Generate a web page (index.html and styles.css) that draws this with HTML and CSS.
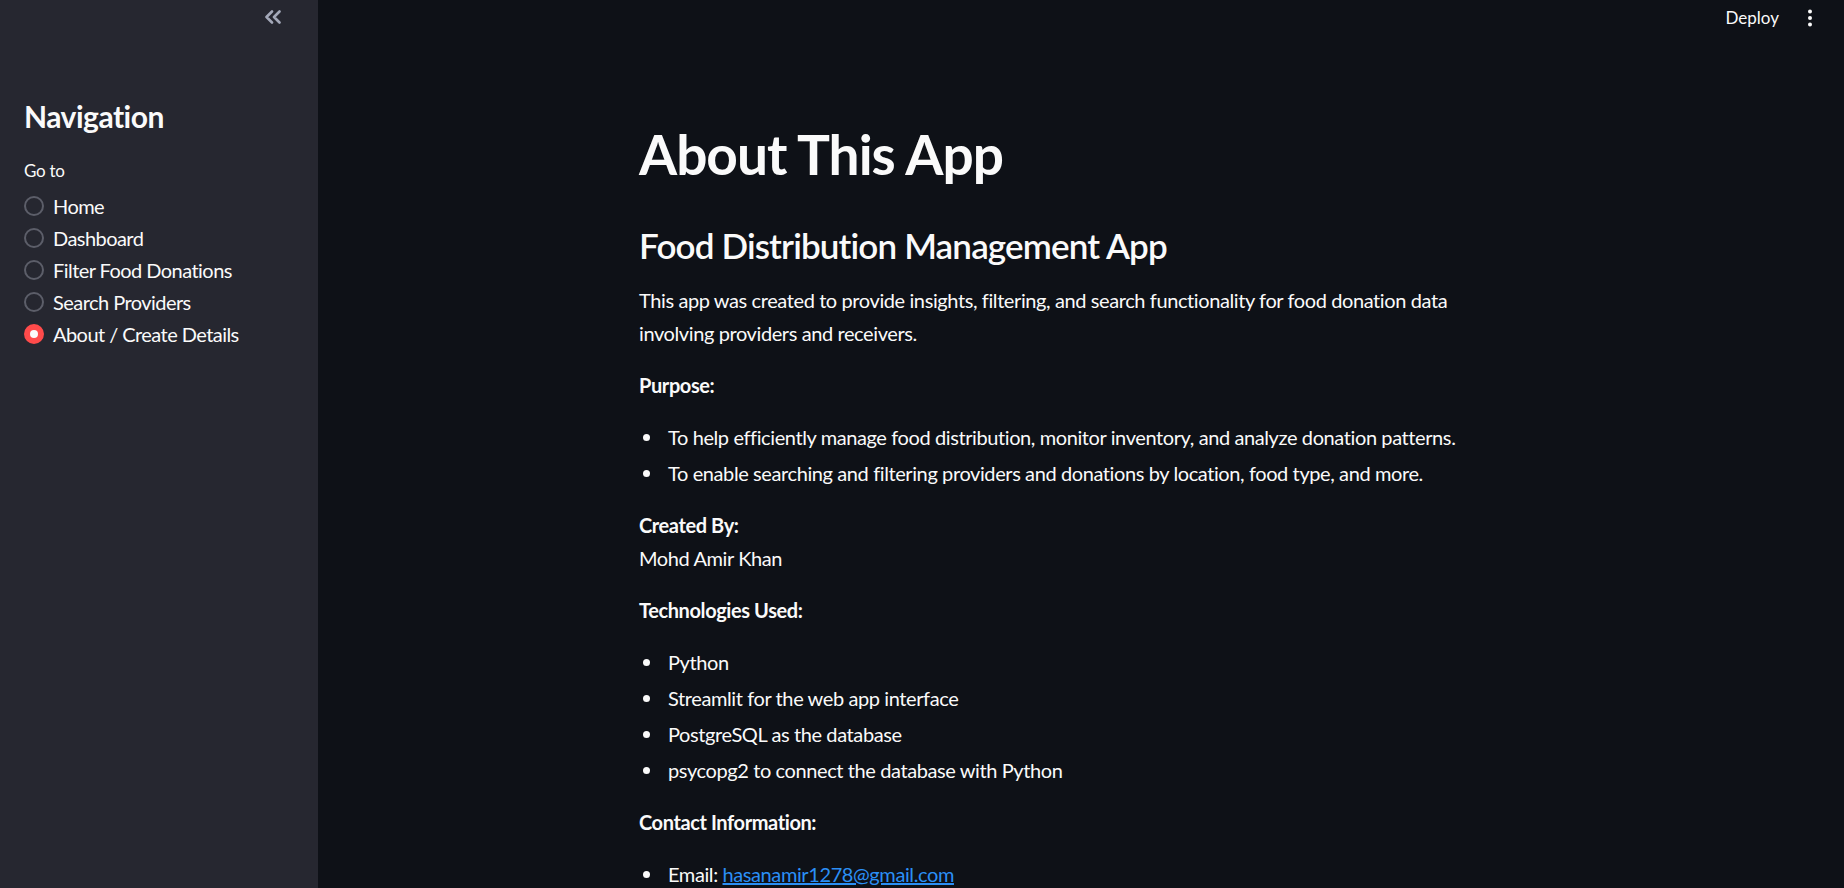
FILE: index.html
```html
<!DOCTYPE html>
<html lang="en">
<head>
<meta charset="utf-8">
<title>About This App</title>
<link rel="stylesheet" href="styles.css">
</head>
<body>
<div class="app">
  <aside class="sidebar">
    <div class="sb-top">
      <span class="collapse" aria-label="Collapse sidebar">
        <svg width="18" height="14" viewBox="0 0 18 14"><path d="M8 1.5 L2.5 7 L8 12.5 M15.5 1.5 L10 7 L15.5 12.5" fill="none" stroke="#a3a8b8" stroke-width="2.6" stroke-linecap="round" stroke-linejoin="round"/></svg>
      </span>
    </div>
    <div class="sb-content">
      <h1 class="sb-title">Navigation</h1>
      <div class="radio-label">Go to</div>
      <div class="radio-group">
        <div class="radio"><span class="dot"></span><span>Home</span></div>
        <div class="radio"><span class="dot"></span><span>Dashboard</span></div>
        <div class="radio"><span class="dot"></span><span>Filter Food Donations</span></div>
        <div class="radio"><span class="dot"></span><span>Search Providers</span></div>
        <div class="radio checked"><span class="dot"></span><span>About / Create Details</span></div>
      </div>
    </div>
  </aside>
  <main class="main">
    <header class="toolbar">
      <span class="deploy">Deploy</span>
      <span class="kebab"><svg width="6" height="18" viewBox="0 0 6 18"><circle cx="3" cy="2.5" r="2" fill="#fafafa"/><circle cx="3" cy="9" r="2" fill="#fafafa"/><circle cx="3" cy="15.5" r="2" fill="#fafafa"/></svg></span>
    </header>
    <div class="block">
      <h1 class="title">About This App</h1>
      <h3 class="subheader">Food Distribution Management App</h3>
      <p>This app was created to provide insights, filtering, and search functionality for food donation data involving providers and receivers.</p>
      <p><strong>Purpose:</strong></p>
      <ul>
        <li>To help efficiently manage food distribution, monitor inventory, and analyze donation patterns.</li>
        <li>To enable searching and filtering providers and donations by location, food type, and more.</li>
      </ul>
      <p><strong>Created By:</strong><br>Mohd Amir Khan</p>
      <p><strong>Technologies Used:</strong></p>
      <ul>
        <li>Python</li>
        <li>Streamlit for the web app interface</li>
        <li>PostgreSQL as the database</li>
        <li>psycopg2 to connect the database with Python</li>
      </ul>
      <p><strong>Contact Information:</strong></p>
      <ul>
        <li>Email: <a href="#">hasanamir1278@gmail.com</a></li>
      </ul>
    </div>
  </main>
</div>
</body>
</html>
```
FILE: styles.css
```css
html, body {
  margin: 0;
  padding: 0;
  height: 100%;
  overflow: hidden;
}
body {
  background: #0e1117;
  color: #fafafa;
  font-family: Lato, "Noto Sans", sans-serif;
}
.app {
  display: flex;
  height: 100vh;
}
.sidebar {
  width: 318px;
  flex: 0 0 318px;
  background: #262730;
  display: flex;
  flex-direction: column;
}
.sb-top {
  height: 34px;
  flex: 0 0 34px;
  display: flex;
  justify-content: flex-end;
  align-items: center;
  padding-right: 36px;
}
.collapse {
  display: flex;
  width: 18px;
  height: 14px;
}
.sb-content {
  padding: 0 24px;
}
.sb-title {
  margin: 64px 0 0;
  font-size: 30px;
  font-weight: 700;
  line-height: 36px;
  letter-spacing: -0.5px;
}
.radio-label {
  margin-top: 26px;
  font-size: 17px;
  line-height: 22px;
  letter-spacing: -0.3px;
}
.radio-group {
  margin-top: 8px;
  display: flex;
  flex-direction: column;
}
.radio {
  display: flex;
  align-items: center;
  gap: 9px;
  height: 32px;
  font-size: 20px;
  letter-spacing: -0.55px;
}
.dot {
  width: 16px;
  height: 16px;
  border: 2px solid #5c5e69;
  border-radius: 50%;
  flex: 0 0 auto;
}
.radio.checked .dot {
  background: #ff4b4b;
  border-color: #ff4b4b;
  position: relative;
}
.radio.checked .dot::after {
  content: "";
  position: absolute;
  left: 4px;
  top: 4px;
  width: 8px;
  height: 8px;
  border-radius: 50%;
  background: #fafafa;
}
.main {
  flex: 1;
  display: flex;
  flex-direction: column;
  min-width: 0;
}
.toolbar {
  height: 36px;
  flex: 0 0 36px;
  display: flex;
  justify-content: flex-end;
  align-items: center;
  gap: 28px;
  padding-right: 31px;
}
.deploy {
  font-size: 17px;
  line-height: 22px;
}
.kebab {
  display: flex;
}
.block {
  width: 880px;
  margin: 0 auto;
  padding: 85px 0 0;
  position: relative;
  left: -2px;
  flex: 0 0 auto;
}
.title {
  margin: 0;
  font-size: 55px;
  line-height: 66px;
  font-weight: 700;
  letter-spacing: -1px;
}
.subheader {
  margin: 37px 0 18px;
  font-size: 35px;
  line-height: 42px;
  font-weight: 600;
  letter-spacing: -0.85px;
}
p {
  margin: 0 0 19px;
  font-size: 20px;
  line-height: 33px;
  letter-spacing: -0.4px;
}
strong {
  font-weight: 700;
}
ul {
  margin: 0 0 19px;
  padding-left: 29px;
  list-style: none;
}
li {
  position: relative;
  font-size: 20px;
  line-height: 33px;
  margin-bottom: 3px;
  letter-spacing: -0.4px;
}
li::before {
  content: "";
  position: absolute;
  left: -25px;
  top: 13px;
  width: 7px;
  height: 7px;
  border-radius: 50%;
  background: #fafafa;
}
a {
  color: #2b8ff5;
  text-decoration: underline;
}
```
